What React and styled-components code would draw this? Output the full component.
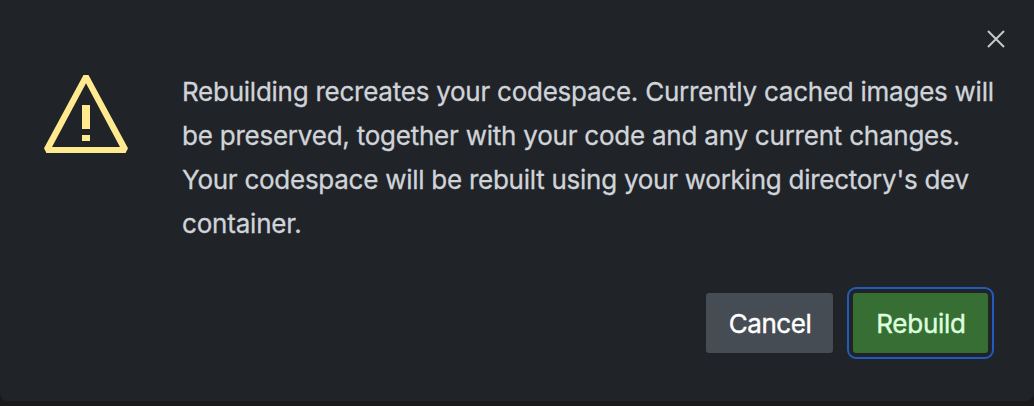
import React from "react";
import styled, { createGlobalStyle } from "styled-components";

const Global = createGlobalStyle`
  * { box-sizing: border-box; }
  body { margin: 0; background: #19191c; font-family: Inter, "Liberation Sans", sans-serif; }
`;
const Dialog = styled.div`
  width: 1034px; height: 401px; background: #202328; border-radius: 0 0 8px 8px;
  display: flex; flex-direction: column;
`;
const Header = styled.div`
  display: flex; justify-content: flex-end; height: 70px; padding: 29px 28px 0 0;
`;
const CloseButton = styled.button`
  border: 0; padding: 0; background: none; width: 20px; height: 20px; color: #c8c8c6;
  svg { display: block; }
`;
const Body = styled.div`
  display: flex; height: 176px; padding-left: 43px;
`;
const IconBox = styled.div`
  width: 139px; padding-top: 4px; flex: none;
  svg { display: block; }
`;
const Message = styled.p`
  margin: 0; font-size: 26px; line-height: 44px; color: #d0d4d9; white-space: nowrap;
  -webkit-text-stroke: 0.3px currentColor;
`;
const Line = styled.span`
  display: block; width: max-content; letter-spacing: ${(p) => p.$track}px;
`;
const Footer = styled.div`
  display: flex; justify-content: flex-end; align-items: center; gap: 14px;
  margin-top: 41px; height: 72px; padding-right: 40px;
`;
const Button = styled.button`
  border: 0; border-radius: 3px; height: 60px; width: ${(p) => p.$width}px; padding: 0 0 0 1px;
  background: ${(p) => (p.$primary ? "#366e34" : "#454c54")};
  color: ${(p) => (p.$primary ? "#ddffdd" : "#ffffff")};
  font: 400 26px Inter, sans-serif; letter-spacing: ${(p) => p.$track}px;
  -webkit-text-stroke: 0.4px currentColor;
`;
const FocusRing = styled.div`
  border: 2px solid #225bbd; border-radius: 9px; padding: 4px; display: flex;
`;

const lines = [
  ["Rebuilding recreates your codespace. Currently cached images will", -0.25],
  ["be preserved, together with your code and any current changes.", -0.23],
  ["Your codespace will be rebuilt using your working directory's dev", -0.26],
  ["container.", -0.2],
];

export default function App() {
  return (
    <>
      <Global />
      <Dialog role="dialog">
        <Header>
          <CloseButton aria-label="Close">
            <svg width="20" height="20" viewBox="0 0 20 20" fill="none" stroke="currentColor" strokeWidth="2">
              <path d="M2 2L18 18M18 2L2 18" />
            </svg>
          </CloseButton>
        </Header>
        <Body>
          <IconBox>
            <svg width="86" height="80" viewBox="0 0 86 80" fill="#ffea8f">
              <path fillRule="evenodd" d="M40.5 1H45.5L85 74.2L82.6 79H3.4L1 74.2ZM43 9.2L9 73H77Z" />
              <path d="M39 31h8v24h-8zM39 61h8v6h-8z" />
            </svg>
          </IconBox>
          <Message>
            {lines.map(([t, k]) => <Line key={t} $track={k}>{t}</Line>)}
          </Message>
        </Body>
        <Footer>
          <Button $width={127} $track={-0.45}>Cancel</Button>
          <FocusRing><Button $primary $width={135} $track={-0.25}>Rebuild</Button></FocusRing>
        </Footer>
      </Dialog>
    </>
  );
}
